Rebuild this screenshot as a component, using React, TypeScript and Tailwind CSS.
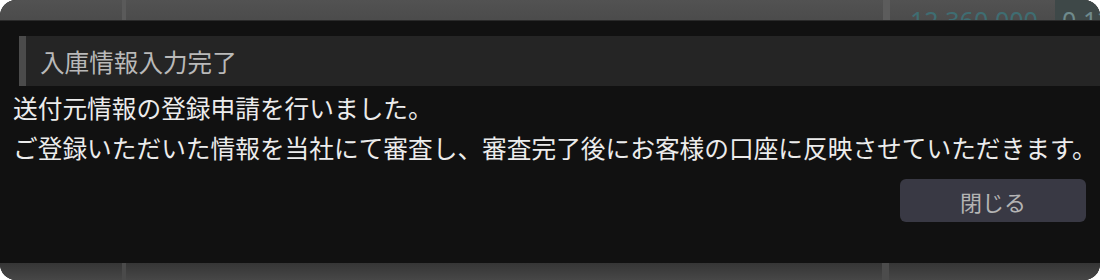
import React from "react";

export default function App() {
  const jp = { fontFamily: '"Noto Sans CJK JP", "Noto Sans", sans-serif' };
  return (
    <div className="w-[1100px] h-[280px] bg-white">
      <div className="relative w-[1100px] h-[280px] rounded-[16px] overflow-hidden bg-[#111111]" style={jp}>
        {/* background table behind the dialog */}
        <div className="flex flex-col h-full justify-between">
          <div className="flex h-[40px] bg-gradient-to-b from-[#525252] to-[#454545]">
            <div className="w-[122px] shrink-0" />
            <div className="w-[4px] shrink-0 bg-[#5a5a5a]" />
            <div className="w-[757px] shrink-0" />
            <div className="w-[7px] shrink-0 bg-[#5c5c5c]" />
            <div className="w-[165px] shrink-0 flex items-center pl-[20px] text-[25px] text-[#3f6d72] leading-none" style={{ fontFamily: '"Noto Sans", sans-serif' }}>
              12,360,000
            </div>
            <div className="flex-1 flex items-center pl-[7px] bg-[#3e4848] text-[25px] text-[#6f8a8c] leading-none" style={{ fontFamily: '"Noto Sans", sans-serif' }}>
              0.12
            </div>
          </div>
          <div className="flex h-[24px] bg-gradient-to-b from-[#2e2e2e] to-[#474747]">
            <div className="w-[122px] shrink-0" />
            <div className="w-[4px] shrink-0 bg-[#4a4a4a]" />
            <div className="w-[756px] shrink-0" />
            <div className="w-[7px] shrink-0 bg-[#4c4c4c]" />
            <div className="flex-1" />
          </div>
        </div>

        {/* dialog overlay */}
        <div className="absolute left-0 right-0 top-[20px] h-[243px] bg-[#111111] border-t border-[#2a2a2a]">
          <div className="mt-[15px] ml-[19px] h-[50px] flex items-center bg-[#252525] border-l-[7px] border-[#4b4b4b]">
            <span className="pl-[14px] text-[24.6px] leading-none text-[#b9b9b9]">入庫情報入力完了</span>
          </div>
          <div className="pl-[13px] pt-[1px] text-[24.7px] leading-[40px] text-[#ececec] whitespace-nowrap">
            <div>送付元情報の登録申請を行いました。</div>
            <div>ご登録いただいた情報を当社にて審査し、審査完了後にお客様の口座に反映させていただきます。</div>
          </div>
          <div className="flex justify-end pr-[14px] pt-[12px]">
            <button className="w-[186px] h-[43px] rounded-[6px] bg-[#393944] text-[22px] text-[#b4b4b4] leading-none flex items-center justify-center" style={jp}>
              閉じる
            </button>
          </div>
        </div>
      </div>
    </div>
  );
}
